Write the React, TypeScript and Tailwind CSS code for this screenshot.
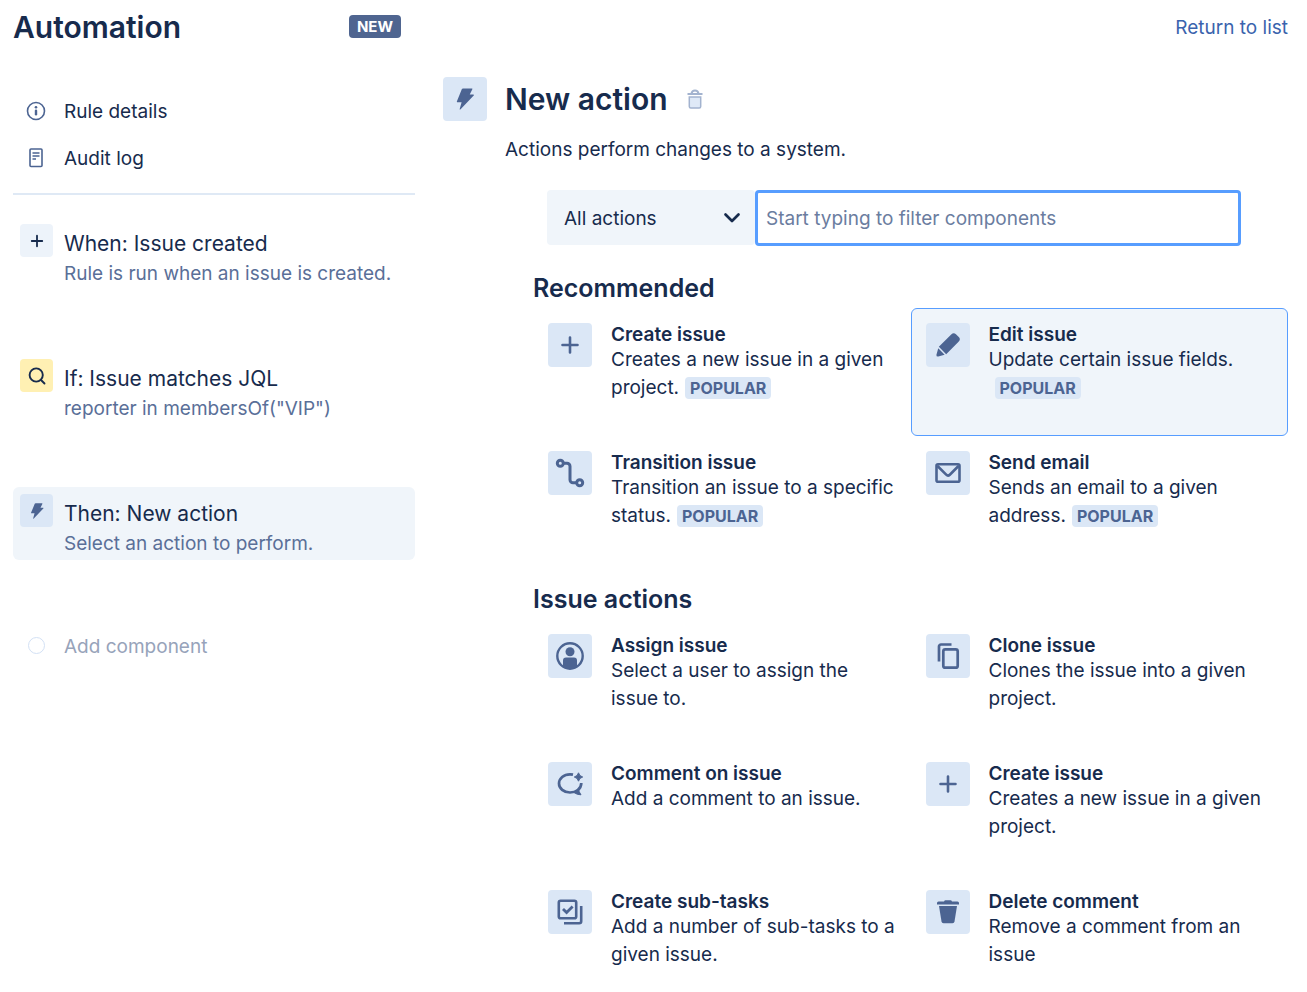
import type { ReactNode } from "react";

type IconProps = { className?: string };

function PlusIcon({ className = "size-5" }: IconProps) {
  return (
    <svg viewBox="0 0 20 20" className={className} fill="none" stroke="currentColor" strokeWidth="2.6" strokeLinecap="round" aria-hidden="true">
      <path d="M10 2.5v15M2.5 10h15" />
    </svg>
  );
}

function BoltIcon({ className = "size-6" }: IconProps) {
  return (
    <svg viewBox="0 0 24 24" className={className} fill="currentColor" aria-hidden="true">
      <path d="M8.6 1.2q.4-.7 1.200-.7h9.700q1 0 .5.900L17.200 7.200h3.900q1.200 0 .4 1L7.200 23.200q-1.200 1-.9-.5L8.300 15.500H4q-1.200 0-.8-1.100z" />
    </svg>
  );
}

function InfoIcon() {
  return (
    <svg viewBox="0 0 20 20" className="size-5" fill="none" stroke="currentColor" strokeWidth="1.6" aria-hidden="true">
      <circle cx="10" cy="10" r="8.5" />
      <circle cx="10" cy="6.3" r="1.3" fill="currentColor" stroke="none" />
      <path d="M10 9.8v3.5" strokeWidth="2.4" strokeLinecap="round" />
    </svg>
  );
}

function LogIcon() {
  return (
    <svg viewBox="0 0 20 20" className="size-5" fill="none" stroke="currentColor" aria-hidden="true">
      <rect x="4" y="1" width="12" height="17.5" rx="1" strokeWidth="1.6" />
      <path d="M6.5 5h7M6.5 8h7M6.5 11h3.5" strokeWidth="1.5" />
    </svg>
  );
}

function SearchIcon() {
  return (
    <svg viewBox="0 0 18 18" className="size-[18px]" fill="none" stroke="currentColor" strokeWidth="1.9" strokeLinecap="round" aria-hidden="true">
      <circle cx="8.2" cy="8" r="6.6" />
      <path d="M13 13l3.5 3.5" />
    </svg>
  );
}

function TransitionIcon() {
  return (
    <svg viewBox="0 0 30 30" className="size-[30px]" fill="none" stroke="currentColor" strokeWidth="3" aria-hidden="true">
      <circle cx="5.3" cy="5.3" r="3" />
      <circle cx="24.7" cy="24.7" r="3" />
      <path d="M8.5 5.3h3.5a3 3 0 0 1 3 3v13.4a3 3 0 0 0 3 3h3.5" />
    </svg>
  );
}

function PencilIcon() {
  return (
    <svg viewBox="0 0 24 24" className="size-6" fill="currentColor" aria-hidden="true">
      <g transform="translate(0.5 23.5) rotate(-45)">
        <path d="M8.500-5.200H26q3.500 0 3.500 3.200V2q0 3.200-3.500 3.200H8.500z" />
        <path d="M7-4.500V4.500L1.200 1.300Q-.5 0 1.200-1.300z" />
      </g>
    </svg>
  );
}

function MailIcon() {
  return (
    <svg viewBox="0 0 26 20" className="h-5 w-[26px]" fill="none" stroke="currentColor" strokeWidth="2.6" strokeLinejoin="round" aria-hidden="true">
      <rect x="1.5" y="1.3" width="23" height="17.4" rx="1.5" />
      <path d="M2.5 3l8.7 8.7a2.6 2.6 0 0 0 3.6 0L23.5 3" />
    </svg>
  );
}

function PersonIcon() {
  return (
    <svg viewBox="0 0 28 28" className="size-7" aria-hidden="true">
      <circle cx="14" cy="14" r="12.7" fill="none" stroke="currentColor" strokeWidth="2.4" />
      <circle cx="14" cy="9.8" r="4.5" fill="currentColor" />
      <path d="M7 18.5a3 3 0 0 1 3-3h8a3 3 0 0 1 3 3V25q-7 4-14 0z" fill="currentColor" />
    </svg>
  );
}

function CloneIcon() {
  return (
    <svg viewBox="0 0 24 28" className="h-7 w-6" fill="none" stroke="currentColor" strokeWidth="2.7" aria-hidden="true">
      <path d="M3 19.5V4.5a2 2 0 0 1 2-2h10.5" />
      <rect x="7.3" y="7.3" width="14.4" height="18.4" rx="2" />
    </svg>
  );
}

function CommentIcon() {
  return (
    <svg viewBox="0 0 28 24" className="h-6 w-7" fill="none" stroke="currentColor" strokeWidth="2.7" aria-hidden="true">
      <path d="M17 2.600A13 13 0 0 0 14 2.300C7.800 2.300 3 6.500 3 11.500s4.800 9 11 9c5.800 0 11.300-3.500 11.300-9.500" />
      <path d="M17.500 20.300 21 18l1.500-1.700q.2 3.700 2.500 6.500-3.500.2-7.500-2.500z" fill="currentColor" strokeWidth="1" />
      <path d="M22.500.800q.8 3.400 4.200 4.200-3.400.8-4.200 4.200-.8-3.400-4.200-4.200 3.400-.8 4.200-4.200z" fill="currentColor" strokeWidth="1" strokeLinejoin="round" />
    </svg>
  );
}

function SubtasksIcon() {
  return (
    <svg viewBox="0 0 26 26" className="size-[26px]" fill="none" stroke="currentColor" strokeWidth="2.6" aria-hidden="true">
      <rect x="1.8" y="1.8" width="17.4" height="17.4" rx="1.8" />
      <path d="M6 10l3.6 3.6 6-6" strokeWidth="2.8" />
      <path d="M24.2 7v15.2a2 2 0 0 1-2 2H7" />
    </svg>
  );
}

function TrashFilledIcon() {
  return (
    <svg viewBox="0 0 24 24" className="size-6" fill="currentColor" aria-hidden="true">
      <path d="M1 3q0-1.500 1.500-1.500H8Q8.500.3 9.500.3h5q1 0 1.500 1.200h5.500Q23 1.500 23 3v1.500H1z" />
      <path d="M3 6h18l-2.500 15.500q-.3 1.800-2 1.800h-9q-1.700 0-2-1.800z" />
    </svg>
  );
}

function TrashOutlineIcon() {
  return (
    <svg viewBox="0 0 18 20" className="h-5 w-[18px]" fill="none" stroke="currentColor" strokeWidth="1.5" aria-hidden="true">
      <path d="M1.500 5h15M5.500 4.500Q6 1.500 9 1.500t3.500 3" strokeWidth="2" />
      <path d="M3.300 8h11.400v9.500q0 1.500-1.500 1.500H4.800q-1.500 0-1.500-1.500z" fill="#dfe9f7" />
    </svg>
  );
}

function IconTile({ children }: { children: ReactNode }) {
  return (
    <span className="flex size-11 shrink-0 items-center justify-center rounded bg-[#dbe7f6] text-[#4c6492]">
      {children}
    </span>
  );
}

type Action = { title: string; text: string; icon: ReactNode; popular?: boolean; selected?: boolean };

const recommended: Action[] = [
  { title: "Create issue", text: "Creates a new issue in a given project.", icon: <PlusIcon />, popular: true },
  { title: "Edit issue", text: "Update certain issue fields.", icon: <PencilIcon />, popular: true, selected: true },
  { title: "Transition issue", text: "Transition an issue to a specific status.", icon: <TransitionIcon />, popular: true },
  { title: "Send email", text: "Sends an email to a given address.", icon: <MailIcon />, popular: true },
];

const issueActions: Action[] = [
  { title: "Assign issue", text: "Select a user to assign the issue to.", icon: <PersonIcon /> },
  { title: "Clone issue", text: "Clones the issue into a given project.", icon: <CloneIcon /> },
  { title: "Comment on issue", text: "Add a comment to an issue.", icon: <CommentIcon /> },
  { title: "Create issue", text: "Creates a new issue in a given project.", icon: <PlusIcon /> },
  { title: "Create sub-tasks", text: "Add a number of sub-tasks to a given issue.", icon: <SubtasksIcon /> },
  { title: "Delete comment", text: "Remove a comment from an issue", icon: <TrashFilledIcon /> },
];

function ActionCard({ action }: { action: Action }) {
  return (
    <button
      type="button"
      className={`flex min-h-32 items-start gap-[19px] rounded-md border py-3.5 pl-3.5 pr-3 text-left ${
        action.selected ? "border-[#579dff] bg-[#f0f5fa]" : "border-transparent"
      }`}
    >
      <IconTile>{action.icon}</IconTile>
      <span className="block">
        <span className="block text-[19px] leading-[23px] font-semibold">{action.title}</span>
        <span className="block text-[19px] leading-7">
          {action.text}
          {action.popular && (
            <span className="ml-1.5 inline-block rounded bg-[#dbe7f6] px-[5px] text-[16px] leading-[22px] font-bold text-[#4c6492]">
              POPULAR
            </span>
          )}
        </span>
      </span>
    </button>
  );
}

function ActionSection({ title, actions }: { title: string; actions: Action[] }) {
  return (
    <section>
      <h2 className="pt-[19px] pb-1 text-[25px] leading-8 font-semibold">{title}</h2>
      <div className="grid grid-cols-2">
        {actions.map((action) => (
          <ActionCard key={action.title} action={action} />
        ))}
      </div>
    </section>
  );
}

type Step = { title: string; text: string; icon: ReactNode; tile: string; selected?: boolean };

const steps: Step[] = [
  { title: "When: Issue created", text: "Rule is run when an issue is created.", icon: <PlusIcon className="size-3.5" />, tile: "bg-[#edf3fa]" },
  { title: "If: Issue matches JQL", text: 'reporter in membersOf("VIP")', icon: <SearchIcon />, tile: "bg-[#fff0b3]" },
  { title: "Then: New action", text: "Select an action to perform.", icon: <BoltIcon className="size-4 text-[#4c6492]" />, tile: "bg-[#dbe7f6]", selected: true },
];

export default function App() {
  return (
    <div className="flex min-h-screen gap-7 bg-white pr-[19px] pb-6 pl-[13px] font-['Inter','Liberation_Sans',sans-serif] text-[#172b4d]">
      <aside className="w-[402px] shrink-0">
        <header className="flex items-start justify-between pt-[7px] pr-3.5">
          <h1 className="text-[30px] leading-10 font-semibold">Automation</h1>
          <span className="mt-2 rounded bg-[#4f6590] px-2 text-[15px] leading-[23px] font-bold text-white">NEW</span>
        </header>
        <nav className="mt-10 border-b-2 border-[#dfe9f5] pb-3 text-[19px]">
          <a href="#details" className="flex h-[47px] items-center gap-[18px] pl-[13px]">
            <span className="text-[#4c6492]"><InfoIcon /></span>
            <span className="pt-1">Rule details</span>
          </a>
          <a href="#log" className="flex h-[47px] items-center gap-[18px] pl-[13px]">
            <span className="text-[#4c6492]"><LogIcon /></span>
            <span className="pt-1">Audit log</span>
          </a>
        </nav>
        <ol className="mt-[22px] flex flex-col gap-[62px]">
          {steps.map((step) => (
            <li key={step.title}>
              <button
                type="button"
                className={`flex h-[73px] w-full items-start gap-[11px] rounded-md px-[7px] pt-[7px] text-left ${step.selected ? "bg-[#f0f5fa]" : ""}`}
              >
                <span className={`flex size-[33px] shrink-0 items-center justify-center rounded ${step.tile}`}>{step.icon}</span>
                <span className="block pt-[5px]">
                  <span className="block text-[21px] leading-[30px]">{step.title}</span>
                  <span className="block text-[19px] leading-[30px] text-[#5a6f98]">{step.text}</span>
                </span>
              </button>
            </li>
          ))}
        </ol>
        <button type="button" className="mt-[67px] flex items-center gap-[18px] pl-[13px] text-[19px] leading-8 text-[#97a3ba]">
          <span className="flex size-5 items-center justify-center">
            <span className="size-[17px] rounded-full border border-[#d3e1f5]" />
          </span>
          <span className="pt-1">Add component</span>
        </button>
      </aside>

      <main className="min-w-0 flex-1">
        <div className="flex justify-end pt-[13px]">
          <a href="#list" className="text-[19px] leading-[30px] text-[#3a63ad]">Return to list</a>
        </div>
        <div className="mt-[34px] flex items-center gap-[18px]">
          <IconTile><BoltIcon className="size-[22px]" /></IconTile>
          <h1 className="text-[30px] leading-[42px] font-semibold">New action</h1>
          <button type="button" aria-label="Delete action" className="text-[#a3b3cf]"><TrashOutlineIcon /></button>
        </div>
        <p className="mt-3.5 pl-[62px] text-[19px] leading-[30px]">Actions perform changes to a system.</p>
        <div className="mt-[25px] mr-[47px] ml-[104px] flex h-14">
          <div className="relative w-[208px] shrink-0">
            <select aria-label="Action category" className="h-[55px] w-full appearance-none rounded bg-[#f0f5fa] pt-[3px] pl-[17px] text-[19px]">
              <option>All actions</option>
            </select>
            <svg viewBox="0 0 18 12" className="pointer-events-none absolute top-[22px] right-3.5 h-3 w-[18px]" fill="none" stroke="currentColor" strokeWidth="2.7" strokeLinecap="round" strokeLinejoin="round" aria-hidden="true">
              <path d="M2.5 2.5 9 9l6.5-6.5" />
            </svg>
          </div>
          <input
            type="text"
            aria-label="Filter components"
            placeholder="Start typing to filter components"
            className="min-w-0 flex-1 rounded border-[3px] border-[#579dff] px-2 pt-0.5 text-[19px] outline-none placeholder:text-[#6b7d9f]"
          />
        </div>
        <div className="mt-[7px] pl-[90px]">
          <ActionSection title="Recommended" actions={recommended} />
          <ActionSection title="Issue actions" actions={issueActions} />
        </div>
      </main>
    </div>
  );
}
